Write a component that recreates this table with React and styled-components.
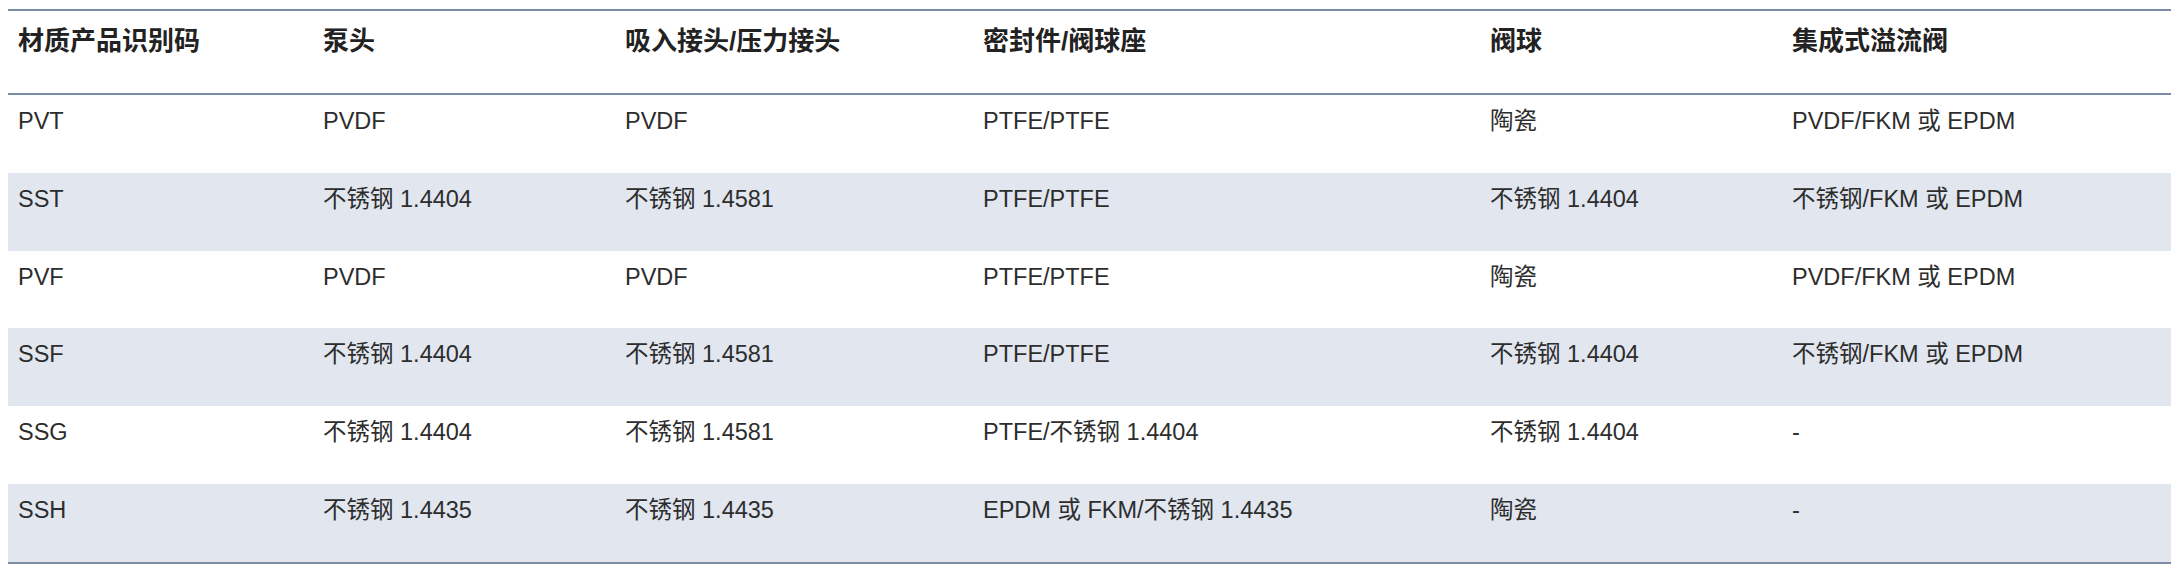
import React from "react";
import styled, { createGlobalStyle } from "styled-components";

const GlobalStyle = createGlobalStyle`
  html, body {
    margin: 0;
    padding: 0;
    background: #ffffff;
  }
  body {
    padding: 9px 8px 8px;
    font-family: "Liberation Sans", "Noto Sans CJK SC", Arial, sans-serif;
    color: #2b2b2b;
  }
`;

const Table = styled.table`
  width: 100%;
  table-layout: fixed;
  border-collapse: collapse;
  border-top: 2px solid #7b8ca4;
  border-bottom: 2px solid #7b8ca4;
`;

const Col = styled.col`
  width: ${(p) => p.$w}px;
`;

const HeadRow = styled.tr`
  border-bottom: 2px solid #7b8ca4;
`;

const HeadCell = styled.th`
  text-align: left;
  vertical-align: top;
  padding: 11px 10px 33px;
  font-size: 26px;
  line-height: 38px;
  font-weight: 700;
  color: #222222;
`;

const Row = styled.tr`
  background: ${(p) => (p.$striped ? "#e1e6ef" : "#ffffff")};
`;

const Cell = styled.td`
  vertical-align: top;
  padding: 10px 10px 34.8px;
  font-size: 23.5px;
  line-height: 33px;
  color: #2d2d2d;
  white-space: nowrap;
`;

const widths = [305, 302, 358, 507, 302, 389];

const headers = [
  "材质产品识别码",
  "泵头",
  "吸入接头/压力接头",
  "密封件/阀球座",
  "阀球",
  "集成式溢流阀",
];

const rows = [
  ["PVT", "PVDF", "PVDF", "PTFE/PTFE", "陶瓷", "PVDF/FKM 或 EPDM"],
  ["SST", "不锈钢 1.4404", "不锈钢 1.4581", "PTFE/PTFE", "不锈钢 1.4404", "不锈钢/FKM 或 EPDM"],
  ["PVF", "PVDF", "PVDF", "PTFE/PTFE", "陶瓷", "PVDF/FKM 或 EPDM"],
  ["SSF", "不锈钢 1.4404", "不锈钢 1.4581", "PTFE/PTFE", "不锈钢 1.4404", "不锈钢/FKM 或 EPDM"],
  ["SSG", "不锈钢 1.4404", "不锈钢 1.4581", "PTFE/不锈钢 1.4404", "不锈钢 1.4404", "-"],
  ["SSH", "不锈钢 1.4435", "不锈钢 1.4435", "EPDM 或 FKM/不锈钢 1.4435", "陶瓷", "-"],
];

const App = () => {
  return (
    <>
      <GlobalStyle />
      <Table>
        <colgroup>
          {widths.map((w, i) => (
            <Col key={i} $w={w} />
          ))}
        </colgroup>
        <thead>
          <HeadRow>
            {headers.map((h) => (
              <HeadCell key={h}>{h}</HeadCell>
            ))}
          </HeadRow>
        </thead>
        <tbody>
          {rows.map((r, i) => (
            <Row key={r[0]} $striped={i % 2 === 1}>
              {r.map((c, j) => (
                <Cell key={j}>{c}</Cell>
              ))}
            </Row>
          ))}
        </tbody>
      </Table>
    </>
  );
};

export default App;
